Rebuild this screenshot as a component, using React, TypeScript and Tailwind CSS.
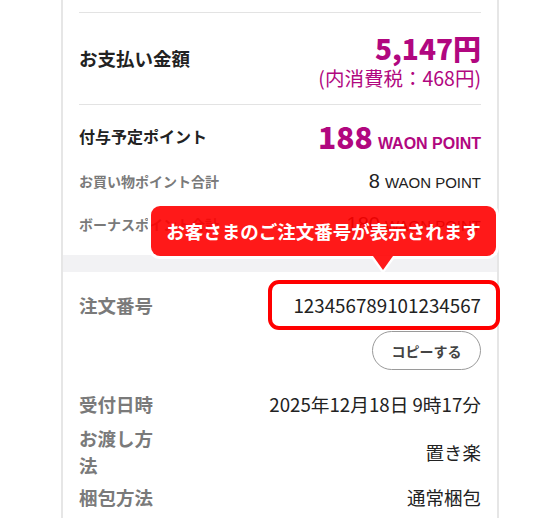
import React from "react";

const FONT = '"Noto Sans CJK JP", "Noto Sans", sans-serif';

export default function App() {
  return (
    <div
      className="relative w-[558px] h-[518px] overflow-hidden bg-white text-[#222]"
      style={{ fontFamily: FONT }}
    >
      <div className="ml-[61px] w-[438px] h-[518px] border-x-2 border-[#e6e6e6] flex flex-col">
        {/* Section 1 */}
        <div className="pl-[16px] pr-[16px] flex flex-col">
          <div className="h-[12px]" />
          <div className="border-t border-[#e3e3e3]" />
          <div className="h-[91px] flex justify-between">
            <div className="self-center text-[18.5px] font-bold leading-none">お支払い金額</div>
            <div className="mt-[19px] flex flex-col items-end text-[#b1077f]">
              <div className="text-[28px] font-black leading-[32px]">5,147円</div>
              <div className="mt-[2px] text-[19.5px] leading-[24px]">(内消費税：468円)</div>
            </div>
          </div>
          <div className="border-t border-[#e3e3e3]" />
          <div className="h-[62px] flex items-center justify-between">
            <div className="text-[16px] font-bold leading-none">付与予定ポイント</div>
            <div className="flex items-baseline text-[#b1077f] font-bold">
              <span className="text-[30px] font-black leading-none">188</span>
              <span className="ml-[5px] text-[16px] leading-none" style={{ fontFamily: '"Liberation Sans", Arial, sans-serif' }}>
                WAON POINT
              </span>
            </div>
          </div>
          <div className="h-[27px] flex items-center justify-between">
            <div className="text-[14px] font-bold text-[#7a7a7a] leading-none">お買い物ポイント合計</div>
            <div className="flex items-baseline text-[#222]" style={{ fontFamily: '"Liberation Sans", Arial, sans-serif' }}>
              <span className="text-[20px] leading-none">8</span>
              <span className="ml-[5px] text-[15px] leading-none">WAON POINT</span>
            </div>
          </div>
          <div className="h-[16px]" />
          <div className="h-[27px] flex items-center justify-between">
            <div className="text-[14px] font-bold text-[#7a7a7a] leading-none">ボーナスポイント合計</div>
            <div className="flex items-baseline text-[#222]" style={{ fontFamily: '"Liberation Sans", Arial, sans-serif' }}>
              <span className="text-[20px] leading-none">180</span>
              <span className="ml-[5px] text-[15px] leading-none">WAON POINT</span>
            </div>
          </div>
          <div className="h-[18px]" />
        </div>

        {/* gray band */}
        <div className="h-[17px] bg-[#f2f2f4]" />

        {/* Section 2 */}
        <div className="pl-[16px] pr-[16px] flex flex-col">
          <div className="h-[8px]" />
          <div className="h-[50px] flex items-center justify-between">
            <div className="text-[18.5px] font-bold text-[#7a7a7a] leading-none">注文番号</div>
            <div className="text-[18.8px] leading-none">123456789101234567</div>
          </div>
          <div className="mt-[1px] flex justify-end">
            <button className="w-[109px] h-[39px] rounded-full border border-[#9a9a9a] bg-white text-[14px] font-bold text-[#444] leading-none">
              コピーする
            </button>
          </div>
          <div className="mt-[19px] h-[30px] flex items-center justify-between">
            <div className="w-[78px] text-[18.5px] font-bold text-[#7a7a7a] leading-none">受付日時</div>
            <div className="text-[18.7px] leading-none">2025年12月18日 9時17分</div>
          </div>
          <div className="mt-[6px] h-[54px] flex items-center justify-between">
            <div className="w-[78px] text-[18.5px] font-bold text-[#7a7a7a] leading-[27px]">お渡し方法</div>
            <div className="text-[18.5px] leading-none">置き楽</div>
          </div>
          <div className="mt-[4px] h-[28px] flex items-center justify-between">
            <div className="w-[78px] text-[18.5px] font-bold text-[#7a7a7a] leading-none">梱包方法</div>
            <div className="text-[18.5px] leading-none">通常梱包</div>
          </div>
        </div>
      </div>

      {/* Tooltip overlay */}
      <div className="absolute left-[151px] top-[206px] w-[345px] h-[50px] rounded-[9px] bg-[#ff0000]/90 shadow-[0_0_0_3px_#ffffff] flex items-center justify-center">
        <span className="text-white text-[18.5px] font-bold leading-none">お客さまのご注文番号が表示されます</span>
      </div>
      <svg className="absolute left-[370px] top-[256px]" width="26" height="19" viewBox="0 0 26 19">
        <polygon points="0,0 26,0 13,18" fill="#ffffff" />
        <polygon points="3,0 23,0 13,14" fill="#ff1a1a" />
      </svg>

      {/* Red highlight box */}
      <div className="absolute left-[268px] top-[280px] w-[232px] h-[50px] rounded-[11px] border-[4px] border-[#ff0000]" />
    </div>
  );
}
